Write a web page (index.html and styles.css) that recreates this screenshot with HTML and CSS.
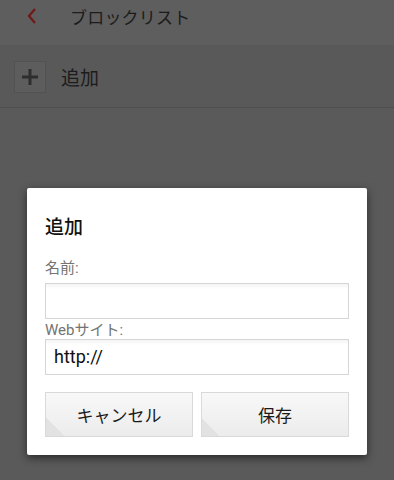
FILE: index.html
```html
<!DOCTYPE html>
<html lang="ja">
<head>
<meta charset="utf-8">
<link rel="stylesheet" href="styles.css">
</head>
<body>
<div class="app">
  <header class="topbar">
    <svg class="back" width="12" height="18" viewBox="0 0 12 18"><path d="M9 2 L3 9 L9 16" fill="none" stroke="#701818" stroke-width="2.2"/></svg>
    <span class="title">ブロックリスト</span>
  </header>
  <div class="row">
    <span class="plusbox">
      <svg width="18" height="18" viewBox="0 0 18 18"><path d="M9 1 V17 M1 9 H17" stroke="#2e2e2e" stroke-width="3"/></svg>
    </span>
    <span class="rowlabel">追加</span>
  </div>
  <div class="rest"></div>
</div>
<div class="overlay">
  <div class="dialog">
    <h1 class="dtitle">追加</h1>
    <label class="flabel">名前:</label>
    <div class="field"></div>
    <label class="flabel web">Webサイト:</label>
    <div class="field url">http://</div>
    <div class="buttons">
      <button class="btn">キャンセル</button>
      <button class="btn">保存</button>
    </div>
  </div>
</div>
</body>
</html>
```
FILE: styles.css
```css
html, body {
  margin: 0;
  padding: 0;
  width: 394px;
  height: 480px;
  overflow: hidden;
  font-family: Roboto, "Noto Sans CJK JP", sans-serif;
  background: #5a5a5a;
}
.app {
  display: flex;
  flex-direction: column;
  height: 480px;
}
.topbar {
  height: 45px;
  background: #5e5e5e;
  display: flex;
  align-items: center;
  padding-left: 26px;
  box-sizing: border-box;
}
.back {
  margin-top: -13px;
}
.title {
  margin-left: 32px;
  margin-top: -13px;
  font-size: 17px;
  color: #1c1c1c;
  letter-spacing: 0.2px;
}
.row {
  height: 62px;
  background: #595959;
  border-bottom: 1px solid #4f4f4f;
  display: flex;
  align-items: center;
  padding-left: 14px;
}
.plusbox {
  width: 30px;
  height: 30px;
  border: 1px solid #525252;
  background: #5d5d5d;
  display: flex;
  align-items: center;
  justify-content: center;
  margin-top: 1px;
}
.rowlabel {
  margin-left: 15px;
  font-size: 19px;
  color: #1c1c1c;
  margin-top: 1px;
}
.rest {
  flex: 1;
  background: #5a5a5a;
}
.overlay {
  position: absolute;
  inset: 0;
  display: flex;
  justify-content: center;
  align-items: flex-start;
  padding-top: 188px;
}
.dialog {
  width: 340px;
  box-sizing: border-box;
  background: #fff;
  border-radius: 2px;
  box-shadow: 0 3px 8px rgba(0,0,0,0.55);
  padding: 26px 18px 18px;
  display: flex;
  flex-direction: column;
}
.dtitle {
  margin: 0;
  font-size: 19px;
  font-weight: 500;
  line-height: 28px;
  color: #111;
}
.flabel {
  margin-top: 17px;
  font-size: 15px;
  line-height: 18px;
  color: #737373;
  height: 18px;
  margin-bottom: 6px;
}
.flabel.web {
  margin-top: 2px;
  margin-bottom: 0;
}
.field {
  height: 36px;
  box-sizing: border-box;
  border: 1px solid #d6d6d6;
  background: linear-gradient(#f4f4f4, #fff 5px);
  font-size: 18px;
  line-height: 34px;
  padding-left: 8px;
  color: #111;
}
.buttons {
  margin-top: 17px;
  display: grid;
  grid-template-columns: 1fr 1fr;
  gap: 8px;
}
.btn {
  position: relative;
  height: 45px;
  border: 1px solid #d9d9d9;
  background: linear-gradient(#f8f8f8, #ececec);
  font-family: Roboto, "Noto Sans CJK JP", sans-serif;
  font-size: 17px;
  color: #1a1a1a;
  padding: 0;
  overflow: hidden;
}
.btn::before {
  content: "";
  position: absolute;
  left: 0;
  bottom: 0;
  width: 18px;
  height: 18px;
  background: linear-gradient(45deg, #e2e2e2 50%, transparent 50%);
}
```
